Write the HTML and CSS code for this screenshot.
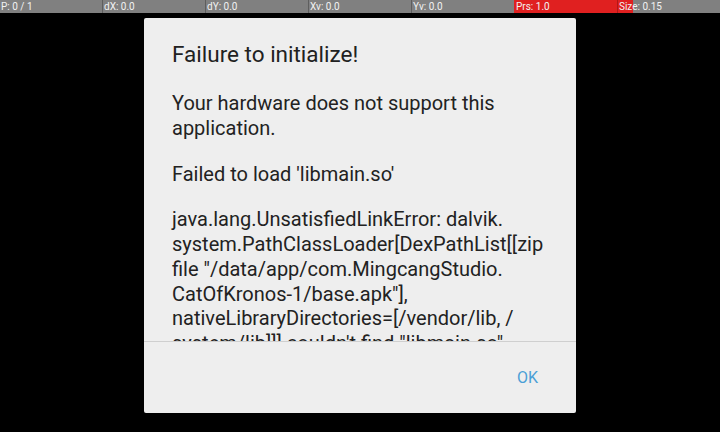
FILE: index.html
```html
<!DOCTYPE html>
<html lang="en">
<head>
<meta charset="UTF-8" />
<meta name="viewport" content="width=device-width, initial-scale=1.0"/>
<title>Failure to initialize!</title>
<link rel="stylesheet" href="styles.css">
</head>
<body>
<!-- Pointer location overlay -->
<div class="pointer-bar">
  <div class="cell">P: 0 / 1</div>
  <div class="cell">dX: 0.0</div>
  <div class="cell">dY: 0.0</div>
  <div class="cell">Xv: 0.0</div>
  <div class="cell">Yv: 0.0</div>
  <div class="cell prs">Prs: 1.0</div>
  <div class="cell size">Size: 0.15</div>
</div>

<div class="dialog">
  <div class="dialog-content">
    <h1 class="dialog-title">Failure to initialize!</h1>
    <p class="first">Your hardware does not support this application.</p>
    <p>Failed to load 'libmain.so'</p>
    <p>java.lang.UnsatisfiedLinkError: dalvik.<br>system.PathClassLoader[DexPathList[[zip<br>file "/data/app/com.MingcangStudio.<br>CatOfKronos-1/base.apk"],<br>nativeLibraryDirectories=[/vendor/lib, /<br>system/lib]]] couldn't find "libmain.so"</p>
  </div>
  <div class="dialog-buttons">
    <button class="btn-ok">OK</button>
  </div>
</div>
</body>
</html>
```

FILE: styles.css
```css
body {
  margin: 0;
  padding: 0;
  background: #000;
  font-family: Roboto, "Noto Sans", sans-serif;
  height: 432px;
  overflow: hidden;
}

.pointer-bar {
  display: flex;
  height: 13px;
  background: #808080;
  color: #f2f2f2;
  font-size: 10px;
  line-height: 13px;
}

.pointer-bar .cell {
  flex: 1;
  padding-left: 1px;
  border-left: 1px solid #5e5e5e;
  white-space: nowrap;
}

.pointer-bar .cell:first-child {
  border-left: none;
}

.pointer-bar .prs {
  background: #e02020;
  border-left-color: #e02020;
}

.pointer-bar .size {
  background: linear-gradient(to right, #e02020 15px, #808080 15px);
  border-left-color: #b01818;
}

.dialog {
  width: 432px;
  height: 395px;
  margin: 5px auto 0;
  background: #eeeeee;
  border-radius: 2px;
  display: flex;
  flex-direction: column;
}

.dialog-content {
  height: 323px;
  overflow: hidden;
  padding: 0 28px;
  border-bottom: 1px solid #cfcfcf;
  color: #222;
}

.dialog-title {
  margin: 22px 0 0;
  font-size: 22.5px;
  font-weight: normal;
  line-height: 28px;
  color: #212121;
}

.dialog-content p {
  margin: 21px 0 0;
  font-size: 20px;
  line-height: 24.75px;
}

.dialog-content p.first {
  margin-top: 23px;
}

.dialog-buttons {
  flex: 1;
  display: flex;
  justify-content: flex-end;
  align-items: center;
  padding-right: 34px;
}

.btn-ok {
  background: none;
  border: none;
  padding: 0 4px;
  font-family: Roboto, sans-serif;
  font-size: 16px;
  color: #4a9fd6;
  cursor: pointer;
}
```
